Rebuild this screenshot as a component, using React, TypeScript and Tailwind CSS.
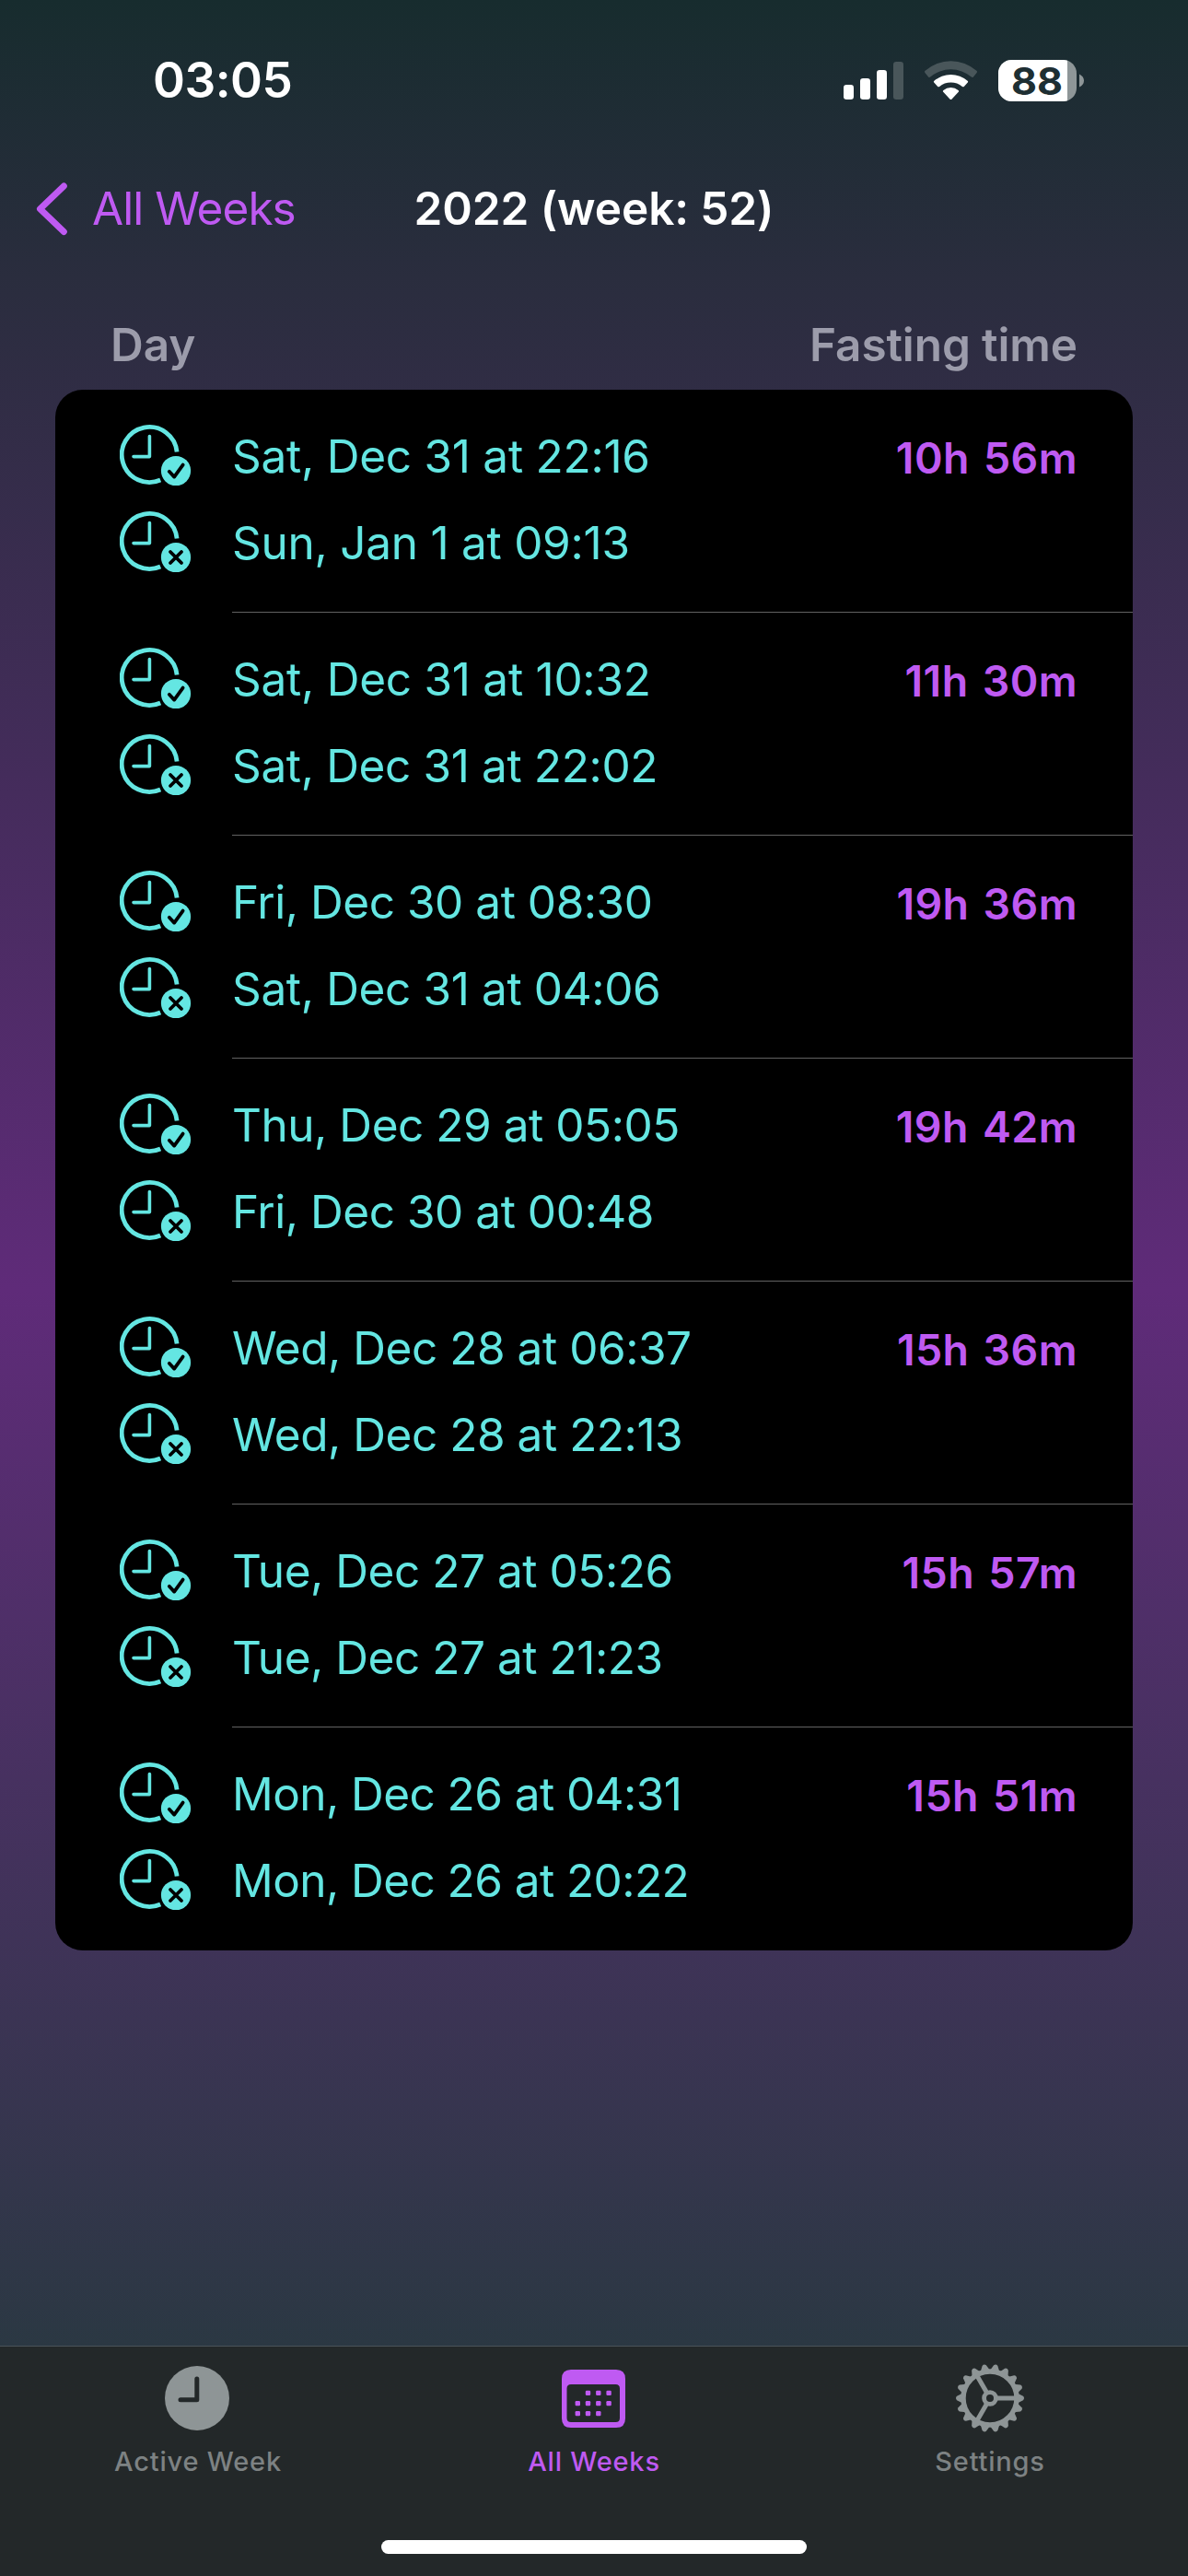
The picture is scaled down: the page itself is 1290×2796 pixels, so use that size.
import React from "react";

type Moment = { text: string; tracking: string };
type Fast = { start: Moment; end: Moment; total: string };

const wide = "tracking-[-0.25px]";
const medium = "tracking-[-0.36px]";
const snug = "tracking-[-0.46px]";
const tight = "tracking-[-0.56px]";

const fasts: Fast[] = [
  { start: { text: "Sat, Dec 31 at 22:16", tracking: wide }, end: { text: "Sun, Jan 1 at 09:13", tracking: wide }, total: "10h 56m" },
  { start: { text: "Sat, Dec 31 at 10:32", tracking: wide }, end: { text: "Sat, Dec 31 at 22:02", tracking: medium }, total: "11h 30m" },
  { start: { text: "Fri, Dec 30 at 08:30", tracking: snug }, end: { text: "Sat, Dec 31 at 04:06", tracking: medium }, total: "19h 36m" },
  { start: { text: "Thu, Dec 29 at 05:05", tracking: snug }, end: { text: "Fri, Dec 30 at 00:48", tracking: snug }, total: "19h 42m" },
  { start: { text: "Wed, Dec 28 at 06:37", tracking: snug }, end: { text: "Wed, Dec 28 at 22:13", tracking: snug }, total: "15h 36m" },
  { start: { text: "Tue, Dec 27 at 05:26", tracking: snug }, end: { text: "Tue, Dec 27 at 21:23", tracking: snug }, total: "15h 57m" },
  { start: { text: "Mon, Dec 26 at 04:31", tracking: tight }, end: { text: "Mon, Dec 26 at 20:22", tracking: tight }, total: "15h 51m" },
];

/* Clock outline with a round badge holding a check or a cross. */
function ClockBadge({ kind }: { kind: "check" | "x" }) {
  return (
    <svg width="80" height="68" viewBox="0 0 80 68" fill="none" className="shrink-0">
      <path d="M62.1 30.6 A30 30 0 1 0 44.2 61" stroke="#64e6e2" strokeWidth="4.8" />
      <path d="M32.4 13.5 V35.6 H15" stroke="#64e6e2" strokeWidth="3.6" strokeLinecap="round" strokeLinejoin="round" />
      <circle cx="61" cy="51" r="16.1" fill="#64e6e2" />
      {kind === "check" ? (
        <path d="M53.8 51.8 L59.2 57.6 L68.6 44.6" stroke="#000" strokeWidth="3.8" strokeLinecap="round" strokeLinejoin="round" />
      ) : (
        <path d="M55 45 L67 57 M67 45 L55 57" stroke="#000" strokeWidth="3.8" strokeLinecap="round" />
      )}
    </svg>
  );
}

function StatusBar() {
  return (
    <div className="flex h-[168px] items-center justify-between pl-[166px] pr-[112px] pt-[6px]">
      <div className="text-[53px] font-semibold leading-none tracking-[-0.5px]">03:05</div>
      <svg width="264" height="48" viewBox="914 62 264 48">
        <rect x="916" y="91" width="11" height="16" rx="3.2" fill="#fff" />
        <rect x="934" y="84" width="11" height="23" rx="3.2" fill="#fff" />
        <rect x="952" y="75" width="11" height="32" rx="3.2" fill="#fff" />
        <rect x="970" y="66" width="11" height="41" rx="3.2" fill="#49565a" />
        <path d="M1004.6 78.2 Q1003.4 77 1004.6 75.8 A42 42 0 0 1 1060.4 75.8 Q1061.6 77 1060.4 78.2 L1056.9 82.5 Q1056 83.6 1054.8 82.6 A34 34 0 0 0 1010.2 82.6 Q1009 83.6 1008.1 82.5 Z" fill="#49565a" />
        <path d="M1014.2 88.6 Q1013.4 87.6 1014.4 86.7 A27.5 27.5 0 0 1 1050.6 86.7 Q1051.6 87.6 1050.8 88.6 L1047 92.8 Q1046 93.8 1044.9 92.9 A19.5 19.5 0 0 0 1020.1 92.9 Q1019 93.8 1018 92.8 Z" fill="#fff" />
        <path d="M1024.2 98.8 Q1023.2 97.8 1024.4 96.9 A13 13 0 0 1 1040.6 96.9 Q1041.8 97.8 1040.8 98.8 L1033.6 106.4 Q1032.5 107.4 1031.4 106.4 Z" fill="#fff" />
        <clipPath id="battery-level">
          <rect x="1084" y="64" width="75" height="45" />
        </clipPath>
        <rect x="1084" y="64" width="85" height="45" rx="14.5" fill="#8e9698" />
        <rect x="1084" y="64" width="85" height="45" rx="14.5" fill="#fff" clipPath="url(#battery-level)" />
        <path d="M1172 79.5 Q1177 82 1177 86.5 Q1177 91 1172 93.5 Z" fill="#8e9698" />
        <text x="1126" y="101.5" textAnchor="middle" fontSize="41.5" fontWeight="700" fill="#1e2f33" textLength="56" lengthAdjust="spacingAndGlyphs">88</text>
      </svg>
    </div>
  );
}

function NavBar() {
  return (
    <div className="grid h-[118px] grid-cols-[1fr_auto_1fr] items-center px-[38px]">
      <div className="flex items-center gap-[26px] text-[#bf5af2]">
        <svg width="36" height="60" viewBox="0 0 36 60" fill="none">
          <path d="M31.3 5 L5.500 29.800 L31.300 54.600" stroke="currentColor" strokeWidth="7" strokeLinecap="round" strokeLinejoin="round" />
        </svg>
        <span className="whitespace-nowrap text-[49.5px] leading-none tracking-[-0.95px]">All Weeks</span>
      </div>
      <h1 className="whitespace-nowrap text-[49.5px] font-semibold leading-none tracking-[-0.1px]">2022 (week: 52)</h1>
      <div />
    </div>
  );
}

function FastRow({ fast, last }: { fast: Fast; last: boolean }) {
  return (
    <li className="flex h-[242px] pl-[70px]">
      <div className="flex w-[122px] flex-col gap-[26px] pt-[37px]">
        <ClockBadge kind="check" />
        <ClockBadge kind="x" />
      </div>
      <div className={last ? "flex flex-1 justify-between" : "flex flex-1 justify-between border-b border-[#626262]"}>
        <div className="flex flex-col pt-[25px] text-[49.5px] leading-[94px] text-[#64e6e2]">
          <span className={`whitespace-nowrap ${fast.start.tracking}`}>{fast.start.text}</span>
          <span className={`whitespace-nowrap ${fast.end.tracking}`}>{fast.end.text}</span>
        </div>
        <div className="pr-[60px] pt-[27px] text-[46.5px] font-semibold leading-[94px] tracking-[0.4px] text-[#bf5af2] [word-spacing:3px]">{fast.total}</div>
      </div>
    </li>
  );
}

function GearIcon() {
  const teeth = Array.from({ length: 18 }, (_, i) => i * 20);
  return (
    <svg width="76" height="76" viewBox="-38 -38 76 76" fill="none">
      {teeth.map((a) => (
        <path key={a} d="M28 -5 L31.5 -4.4 L36 -2.2 Q38 0 36 2.2 L31.5 4.4 L28 5 Z" fill="currentColor" transform={`rotate(${a})`} />
      ))}
      <circle r="29" stroke="currentColor" strokeWidth="5.4" />
      <circle r="6.4" stroke="currentColor" strokeWidth="4.8" />
      {[0, 120, 240].map((a) => (
        <path key={a} d="M7.5 0 H28" stroke="currentColor" strokeWidth="5" transform={`rotate(${a})`} />
      ))}
    </svg>
  );
}

function CalendarIcon() {
  const dots = [
    [25.8, 22.8], [37.1, 22.8], [48.4, 22.8],
    [14.6, 34], [25.8, 34], [37.1, 34], [48.4, 34],
    [14.6, 45.1], [25.8, 45.1], [37.1, 45.1],
  ];
  return (
    <svg width="69" height="63" viewBox="0 0 69 63" className="mr-[2px]">
      <path
        fillRule="evenodd"
        fill="currentColor"
        d="M10 0 H59 Q69 0 69 10 V53 Q69 63 59 63 H10 Q0 63 0 53 V10 Q0 0 10 0 Z M10 16 Q5.5 16 5.5 20.5 V52.5 Q5.5 57 10 57 H58.5 Q63 57 63 52.5 V20.5 Q63 16 58.5 16 Z"
      />
      {dots.map(([x, y]) => (
        <rect key={`${x}-${y}`} x={x} y={y} width="5.4" height="5.2" rx="1.2" fill="currentColor" />
      ))}
    </svg>
  );
}

function ClockFilledIcon() {
  return (
    <svg width="70" height="70" viewBox="0 0 70 70" fill="none" className="mr-[2px]">
      <circle cx="35" cy="35" r="35" fill="currentColor" />
      <path d="M34.8 14 V36.8 H17" stroke="#232829" strokeWidth="5" strokeLinecap="round" strokeLinejoin="round" />
    </svg>
  );
}

function Tab({ label, active, children }: { label: string; active?: boolean; children: React.ReactNode }) {
  return (
    <div className={active ? "flex flex-1 flex-col items-center text-[#bf5af2]" : "flex flex-1 flex-col items-center text-[#8e9596]"}>
      <div className="flex h-[112px] items-center justify-center">{children}</div>
      <span
        className={
          active
            ? "-mt-[2px] text-[29px] font-medium leading-[30px] tracking-[0.8px]"
            : "-mt-[2px] text-[29px] font-medium leading-[30px] tracking-[0.8px] text-[#7d8283]"
        }
      >
        {label}
      </span>
    </div>
  );
}

export default function App() {
  return (
    <div className="flex h-[2796px] w-[1290px] flex-col overflow-hidden bg-[linear-gradient(180deg,#172c2e_0px,#2a2d3e_300px,#5f2b79_1400px,#2b3843_2546px)] font-['Inter',sans-serif] text-white">
      <StatusBar />
      <NavBar />
      <main className="flex-1 px-[60px]">
        <div className="flex h-[137px] items-center justify-between px-[60px] pt-[41px] text-[49.5px] font-semibold leading-none tracking-[-0.1px] text-[#9c9cab]">
          <span>Day</span>
          <span>Fasting time</span>
        </div>
        <ul className="overflow-hidden rounded-[30px] bg-black">
          {fasts.map((f, i) => (
            <FastRow key={f.start.text} fast={f} last={i === fasts.length - 1} />
          ))}
        </ul>
      </main>
      <nav className="flex h-[250px] flex-col border-t border-[#4a5359] bg-[#232829]">
        <div className="flex flex-1">
          <Tab label="Active Week"><ClockFilledIcon /></Tab>
          <Tab label="All Weeks" active><CalendarIcon /></Tab>
          <Tab label="Settings"><GearIcon /></Tab>
        </div>
        <div className="mx-auto mb-[24px] h-[15px] w-[462px] rounded-full bg-white" />
      </nav>
    </div>
  );
}
